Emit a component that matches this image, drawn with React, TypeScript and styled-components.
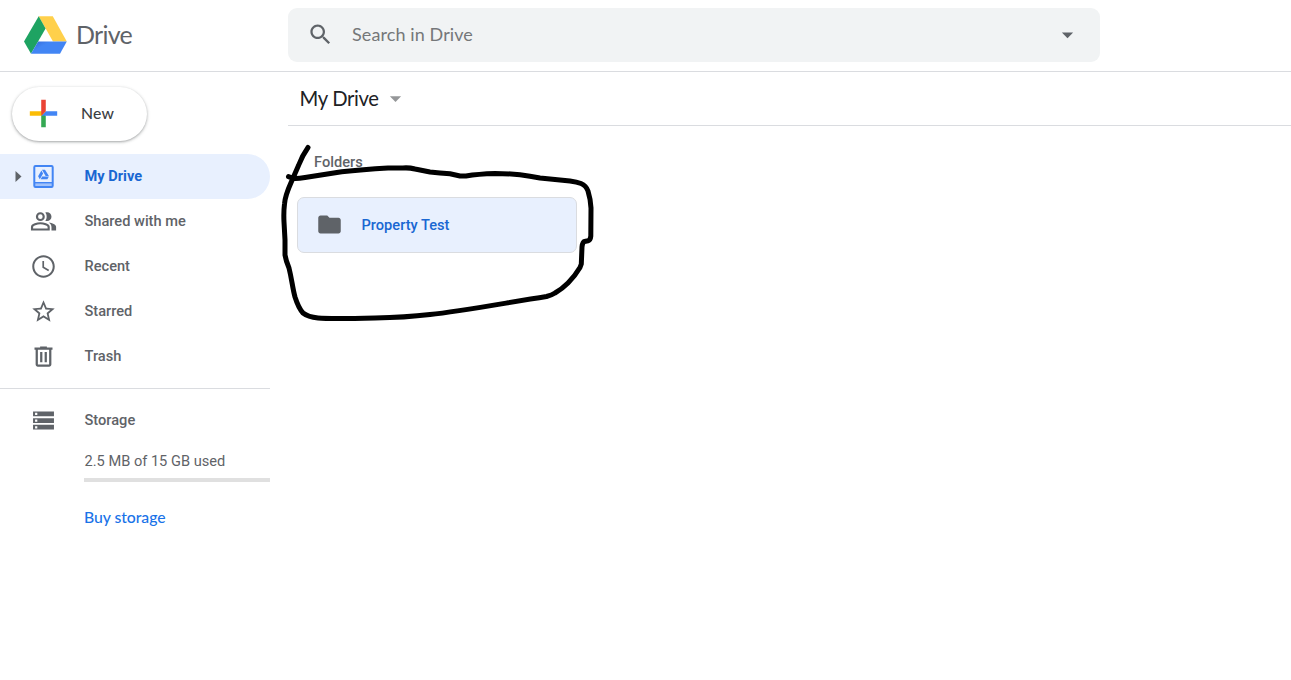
import React from "react";
import styled, { createGlobalStyle } from "styled-components";

const GlobalStyle = createGlobalStyle`
  * { box-sizing: border-box; }
  body { margin: 0; background: #fff; font-family: Roboto, "Liberation Sans", sans-serif; color: #5f6368; overflow: hidden; }
`;

const Page = styled.div`
  position: relative;
  display: flex;
  flex-direction: column;
  height: 680px;
`;

const Header = styled.header`
  display: flex;
  align-items: flex-start;
  height: 72px;
  border-bottom: 1px solid #dadce0;
`;

const Brand = styled.div`
  display: flex;
  align-items: center;
  width: 288px;
  height: 71px;
  padding-left: 23px;
  gap: 8px;
`;

const Product = styled.span<{ $size: number; $color: string; $weight?: number; $spacing?: number; $lift?: number }>`
  font-family: Lato, "Open Sans", sans-serif;
  font-size: ${(p) => p.$size}px;
  line-height: 1.25;
  font-weight: ${(p) => p.$weight ?? 400};
  color: ${(p) => p.$color};
  letter-spacing: ${(p) => p.$spacing ?? 0}px;
  padding-bottom: ${(p) => p.$lift ?? 2}px;
  white-space: nowrap;
`;

const SearchBar = styled.div`
  display: flex;
  align-items: center;
  width: 812px;
  height: 54px;
  margin-top: 8px;
  padding: 0 19px 2px 19px;
  border-radius: 9px;
  background: #f1f3f4;
`;

const SearchLabel = styled.div`
  flex: 1;
  padding-left: 18px;
  display: flex;
`;

const Body = styled.div`
  display: flex;
  flex: 1;
`;

const Sidebar = styled.aside`
  width: 270px;
  padding-top: 15px;
`;

const NewButton = styled.button`
  display: flex;
  align-items: center;
  width: 135px;
  height: 54px;
  margin: 0 0 13px 12px;
  padding: 0 0 1px 11px;
  gap: 17px;
  border: 0;
  border-radius: 27px;
  background: #fff;
  box-shadow: 0 1px 2px 0 rgba(60, 64, 67, 0.302), 0 1px 3px 1px rgba(60, 64, 67, 0.149);
`;

const NavRow = styled.div<{ $active?: boolean }>`
  display: flex;
  align-items: center;
  height: 45px;
  padding-left: 14px;
  border-radius: 0 23px 23px 0;
  background: ${(p) => (p.$active ? "#e8f0fe" : "transparent")};
  color: ${(p) => (p.$active ? "#1967d2" : "#5f6368")};
  font-size: 14.625px;
  font-weight: ${(p) => (p.$active ? 700 : 500)};
`;

const Expander = styled.div`
  display: flex;
  width: 16px;
`;

const NavLabel = styled.span`
  padding: 0 0 1px 27.5px;
  white-space: nowrap;
`;

const Divider = styled.div`
  height: 1px;
  margin: 9px 0 9px;
  background: #dadce0;
`;

const StorageInfo = styled.div`
  display: flex;
  flex-direction: column;
  padding: 9px 0 0 84px;
`;

const Usage = styled.div`
  font-size: 14.625px;
  line-height: 18px;
  padding-left: 0.5px;
`;

const Meter = styled.div`
  height: 4px;
  margin: 8px 0 25px;
  background: #e0e0e0;
`;

const Main = styled.main`
  flex: 1;
  margin-left: 18px;
`;

const PathBar = styled.div`
  display: flex;
  align-items: center;
  height: 54px;
  padding-left: 11.5px;
  gap: 3.5px;
  border-bottom: 1px solid #dadce0;
`;

const SectionTitle = styled.h2`
  margin: 26px 0 0 26px;
  font-size: 14.625px;
  line-height: 20px;
  font-weight: 500;
`;

const FolderCard = styled.div`
  display: flex;
  align-items: center;
  width: 280px;
  height: 56px;
  margin: 25px 0 0 9px;
  padding: 0 0 1px 18px;
  gap: 18.5px;
  border: 1px solid #dadce0;
  border-radius: 7px;
  background: #e8f0fe;
  color: #1967d2;
  font-size: 14.625px;
  font-weight: 500;
`;

const Annotation = styled.svg`
  position: absolute;
  left: 0;
  top: 0;
  pointer-events: none;
`;

const Glyph = styled.svg`
  flex: none;
  width: 27px;
  height: 27px;
  fill: currentColor;
`;

const DriveLogo = () => (
  <svg width="45" height="40" viewBox="0 0 45 40">
    <defs>
      <linearGradient id="fold" x1="0" y1="0" x2="1" y2="0.6">
        <stop offset="0" stopColor="#3367d6" />
        <stop offset="0.4" stopColor="#4285f4" />
      </linearGradient>
    </defs>
    <path d="M15.7 0.3H29.8L43.8 25.5H30Z" fill="#ffd04b" />
    <path d="M15.7 0.3L22.6 12.6L8 37.8L1 25.5Z" fill="#1ea362" />
    <path d="M15.1 25.5H43.8L37 37.8H8Z" fill="url(#fold)" />
  </svg>
);

const PlusMark = () => (
  <svg width="41" height="41" viewBox="0 0 36 36">
    <path fill="#34a853" d="M16 16v14h4V20z" />
    <path fill="#4285f4" d="M30 16H20l-4 4h14z" />
    <path fill="#fbbc05" d="M6 16v4h10l4-4z" />
    <path fill="#ea4335" d="M20 16V6h-4v14z" />
  </svg>
);

const MyDriveIcon = () => (
  <Glyph viewBox="0 0 27 27">
    <path d="M4 20h19v3.500H4z" fill="#a1c2fa" />
    <rect x="4.300" y="3" width="18.400" height="21" rx="1.200" fill="none" stroke="#4285f4" strokeWidth="2" />
    <path d="M4 19h19v1.400H4z" fill="#4285f4" />
    <path d="M12 6.700h3l3.900 6.300h-3.300zM11.400 7.600l1.700 2.900-3.300 5.700-1.700-3zM12.200 13.600h6.700l-1.500 2.600h-6.700z" fill="#4285f4" />
  </Glyph>
);

const navItems = [
  {
    label: "Shared with me",
    icon: (
      <g>
        <circle cx="9.200" cy="7.700" r="3" fill="none" stroke="currentColor" strokeWidth="1.900" />
        <path d="M1.800 19.200V16.900C1.800 14.800 6.500 13.700 9.200 13.700S16.600 14.800 16.600 16.900V19.200Z" transform="translate(0 -.1)" fill="none" stroke="currentColor" strokeWidth="1.900" />
        <path d="M13.600 4.100c.5-.2 1-.3 1.600-.3 2.150 0 3.900 1.750 3.900 3.900s-1.750 3.900-3.900 3.900c-.6 0-1.100-.1-1.600-.3.800-1 1.200-2.200 1.200-3.600s-.4-2.600-1.200-3.600z" />
        <path d="M16.700 12.900c3 .5 6.500 1.700 6.500 4v3.200h-4.100v-3.200c0-1.700-.9-3-2.400-4z" />
      </g>
    ),
  },
  {
    label: "Recent",
    icon: (
      <path d="M11.990 2C6.470 2 2 6.480 2 12s4.470 10 9.990 10C17.520 22 22 17.520 22 12S17.520 2 11.990 2zM12 20.200c-4.530 0-8.200-3.670-8.200-8.200S7.470 3.800 12 3.800s8.200 3.670 8.200 8.200-3.670 8.200-8.200 8.200zM12.500 7H11v6l5.250 3.150.75-1.230-4.500-2.670z" />
    ),
  },
  {
    label: "Starred",
    icon: (
      <path d="M22 9.240l-7.190-.62L12 2 9.190 8.630 2 9.240l5.460 4.730L5.820 21 12 17.270 18.180 21l-1.630-7.030L22 9.240zM12 15.400l-3.760 2.270 1-4.280-3.320-2.880 4.380-.38L12 6.100l1.710 4.040 4.380.38-3.320 2.880 1 4.280L12 15.400z" />
    ),
  },
  {
    label: "Trash",
    icon: (
      <path d="M15 4V3H9v1H4v2h1v13c0 1.100.9 2 2 2h10c1.100 0 2-.9 2-2V6h1V4h-5zm2 15H7V6h10v13zM9 8h2v9H9zm4 0h2v9h-2z" />
    ),
  },
];

export default function App() {
  return (
    <Page>
      <GlobalStyle />
      <Header>
        <Brand>
          <DriveLogo />
          <Product $size={25} $color="#5f6368" $spacing={-0.7}>Drive</Product>
        </Brand>
        <SearchBar>
          <Glyph viewBox="0 0 24 24">
            <path d="M15.500 14h-.79l-.28-.27C15.410 12.590 16 11.110 16 9.500 16 5.910 13.090 3 9.500 3S3 5.910 3 9.500 5.910 16 9.500 16c1.610 0 3.090-.59 4.230-1.570l.27.28v.79l5 4.990L20.490 19l-4.990-5zm-6 0C7.010 14 5 11.990 5 9.500S7.010 5 9.500 5 14 7.010 14 9.500 11.990 14 9.500 14z" />
          </Glyph>
          <SearchLabel>
            <Product $size={18} $color="#757779" $spacing={0.1} $lift={0}>Search in Drive</Product>
          </SearchLabel>
          <Glyph viewBox="0 0 24 24">
            <path d="M7 10.300l5 5 5-5z" />
          </Glyph>
        </SearchBar>
      </Header>
      <Body>
        <Sidebar>
          <NewButton>
            <PlusMark />
            <Product $size={15.75} $color="#3c4043" $weight={500} $spacing={0.2}>New</Product>
          </NewButton>
          <NavRow $active>
            <Expander>
              <svg width="8" height="11" viewBox="0 0 8 11">
                <path d="M1.500 0L7.500 5.500L1.500 11Z" fill="#5f6368" />
              </svg>
            </Expander>
            <MyDriveIcon />
            <NavLabel>My Drive</NavLabel>
          </NavRow>
          {navItems.map((item) => (
            <NavRow key={item.label}>
              <Expander />
              <Glyph viewBox="0 0 24 24">{item.icon}</Glyph>
              <NavLabel>{item.label}</NavLabel>
            </NavRow>
          ))}
          <Divider />
          <NavRow>
            <Expander />
            <Glyph viewBox="0 0 24 24">
              <path fillRule="evenodd" d="M2.700 20h18.600v-4.300H2.700zm1.800-3h2v2h-2zM2.700 4v4.300h18.600V4zm3.800 3h-2V5h2zm-3.800 7.200h18.600V9.900H2.700zm1.800-3.200h2v2h-2z" />
            </Glyph>
            <NavLabel>Storage</NavLabel>
          </NavRow>
          <StorageInfo>
            <Usage>2.5 MB of 15 GB used</Usage>
            <Meter />
            <Product $size={15.75} $color="#1a73e8" $weight={500} $spacing={-0.05}>Buy storage</Product>
          </StorageInfo>
        </Sidebar>
        <Main>
          <PathBar>
            <Product $size={20.25} $color="#202124" $spacing={-0.35} $lift={0}>My Drive</Product>
            <Glyph viewBox="0 0 24 24">
              <path d="M7 10l5 5 5-5z" fill="#959799" />
            </Glyph>
          </PathBar>
          <SectionTitle>Folders</SectionTitle>
          <FolderCard>
            <Glyph viewBox="0 0 24 24">
              <path fill="#5f6368" d="M10 4H4c-1.100 0-1.990.9-1.990 2L2 18c0 1.100.9 2 2 2h16c1.100 0 2-.9 2-2V8c0-1.100-.9-2-2-2h-8l-2-2z" />
            </Glyph>
            <span>Property Test</span>
          </FolderCard>
        </Main>
      </Body>
      <Annotation width="700" height="400" viewBox="0 0 700 400" fill="none" stroke="#000" strokeWidth="5" strokeLinecap="round" strokeLinejoin="round">
        <path d="M308 147.500Q302 156 298.500 165.500L291.500 181.500Q285 196 284.500 204Q283.500 212 284 222L285 240L285 255Q286 261 289 268C292 280 292.500 288 295 297Q298.500 308 303 313Q308 317 318 318Q330 319 375 318Q405 317.500 430 314.500C460 311.500 505 303 546.500 296.500Q552 295 555 293Q562 289 568 283Q575 276 580 267.500L581.300 264L582 247Q582.500 242 584.500 241.500L588 240.800Q590.500 240 590.800 236L591 208Q590.500 199 588 191Q586 185.500 581 183.500Q577 182 570 181L540 178Q530 176 520 174.800Q508 173.500 495 173.500Q478 174 466 176H460L450 173.800Q440 173 430 172L415 169Q409 167.500 403 168L388 168Q362 169.500 341.700 171.700L305 177.500Q297 178.800 293 178.300L288.500 176.700" />
      </Annotation>
    </Page>
  );
}
